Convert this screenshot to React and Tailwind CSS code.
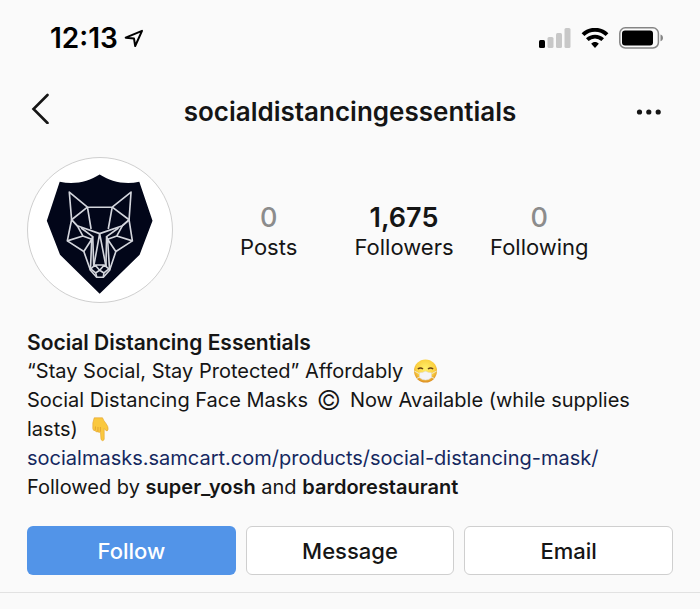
import React from "react";

const stats = [
  { label: "Posts", value: "0", muted: true },
  { label: "Followers", value: "1,675", muted: false },
  { label: "Following", value: "0", muted: true },
];

const StatusBar = () => {
  return (
    <div className="flex justify-between items-center h-7 pl-[50px] pr-9">
      <div className="flex items-center gap-[6px]">
        <span className="text-[28px] leading-7 font-semibold text-black">12:13</span>
        <svg width="20" height="19" viewBox="0 0 20 19" fill="none" aria-label="Location">
          <path
            d="M1.7 8.7 L18 1.8 L11.2 17 L10 9.6 Z"
            stroke="black"
            strokeWidth="2"
            strokeLinejoin="round"
          />
        </svg>
      </div>
      <div className="flex items-center gap-[10px]">
        <svg width="32" height="20" viewBox="0 0 32 20" aria-label="Signal">
          <rect x="0" y="12" width="6" height="8" rx="1.5" fill="black" />
          <rect x="8.5" y="9" width="6" height="11" rx="1.5" fill="#c8c8c8" />
          <rect x="17" y="5" width="6" height="15" rx="1.5" fill="#c8c8c8" />
          <rect x="25.5" y="0" width="6" height="20" rx="1.5" fill="#c8c8c8" />
        </svg>
        <svg width="28" height="20" viewBox="0 0 28 20" fill="none" aria-label="Wi-Fi">
          <path d="M2 6.6 C8.6 .2 19.4 .2 26 6.6" stroke="black" strokeWidth="4" />
          <path d="M6.3 11.7 C10.6 7.6 17.4 7.6 21.7 11.7" stroke="black" strokeWidth="3.8" />
          <path d="M10.2 15.8 C12.2 13.4 15.8 13.4 17.8 15.8 L14 20 Z" fill="black" />
        </svg>
        <svg width="45" height="22" viewBox="0 0 45 22" fill="none" aria-label="Battery">
          <rect x=".8" y=".8" width="38.6" height="20.2" rx="5.5" stroke="#858585" strokeWidth="1.5" />
          <rect x="3" y="3.4" width="31" height="15" rx="3" fill="black" />
          <path d="M41.5 7.5 C44.8 8.2 44.8 13.6 41.5 14.3 Z" fill="#858585" />
        </svg>
      </div>
    </div>
  );
};

const WolfLogo = () => {
  return (
    <svg viewBox="21 22 436 436" className="w-full h-full" aria-label="Social Distancing Essentials">
      <path
        d="M238 72 C205 93 163 104 117 94 L78 212 L118 315 L238 433 L359 315 L398 212 L358 94 C313 104 271 93 238 72 Z"
        fill="#020619"
      />
      <g fill="none" stroke="#d3d5dc" strokeWidth="5" strokeLinejoin="round">
        <path d="M146 125 L201 171 H276 L333 125 L327 209 L337 273 L287 305 L268 362 L249 383 H229 L210 362 L190 305 L140 273 L153 209 Z" />
        <path d="M201 171 L153 209 L170 227 M276 171 L327 209 L307 227" />
        <path d="M201 171 L212 237 M276 171 L264 237" />
        <path d="M153 209 L170 227 L238 251 L307 227 L327 209" />
        <path d="M170 227 L187 258 L140 273 M187 258 L214 268 L190 305 M182 234 L217 260 L214 268 L210 362" />
        <path d="M307 227 L290 258 L337 273 M290 258 L262 268 L287 305 M295 234 L259 260 L262 268 L268 362" />
        <path d="M238 251 L220 350 M238 251 L257 350" />
        <path d="M217 260 L220 350 M259 260 L257 350" />
        <path d="M224 346 H252 L266 358 L251 370 L238 362 L226 370 L211 358 Z M224 346 L238 362 L252 346 M226 370 L229 383 M251 370 L249 383" />
      </g>
    </svg>
  );
};

const MaskEmoji = () => {
  return (
    <svg width="25" height="24" viewBox="0 0 25 24" className="inline-block align-[-5px]" role="img" aria-label="Face with medical mask">
      <defs>
        <radialGradient id="face" cx="50%" cy="38%" r="62%">
          <stop offset="0" stopColor="#fff06a" />
          <stop offset=".65" stopColor="#fbd040" />
          <stop offset="1" stopColor="#dc8d22" />
        </radialGradient>
      </defs>
      <circle cx="12.5" cy="12" r="11.5" fill="url(#face)" />
      <path d="M4.8 10 Q7.5 8 10 10 M15 10 Q17.5 8 20.2 10" fill="none" stroke="#684014" strokeWidth="1.5" />
      <path d="M1.3 12 L6 14.5 M23.7 12 L19 14.5 M3.5 19.5 L7 18 M21.5 19.5 L18 18" stroke="#eee6cf" strokeWidth="1" />
      <path d="M6.5 13.8 Q9.5 13.8 12.5 12.2 Q15.5 13.8 18.5 13.8 V18.5 Q16 21 12.5 21 Q9 21 6.5 18.5 Z" fill="#f4f4f6" stroke="#dcd9d2" strokeWidth=".5" />
    </svg>
  );
};

const PointDownEmoji = () => {
  return (
    <svg width="18" height="25" viewBox="0 0 18 25" className="inline-block align-[-6px]" role="img" aria-label="Pointing down">
      <path
        d="M3.2 .8 H11.5 Q12.5 3.5 15 6.5 Q17.8 10 17 13 Q16.3 14.6 14.8 13.4 L13.2 11.5 V22.5 Q11.8 25 10 22.5 L9.4 14.6 Q8.4 16.2 6.9 14.8 Q5.1 15.5 4.2 13.7 Q1.9 13.9 1.8 11.6 Q1.2 5.5 3.2 .8 Z"
        fill="#fac83e"
        stroke="#e2a12d"
        strokeWidth=".6"
      />
      <path d="M4.2 13.3 L4.5 9.5 M6.9 14.5 L7 10 M9.4 14.5 V10" fill="none" stroke="#d9952a" strokeWidth=".7" />
    </svg>
  );
};

const App = () => {
  return (
    <div className="min-h-screen bg-[#fafafa] pt-6 font-['Inter',sans-serif] text-[#151515]">
      <StatusBar />

      <header className="flex justify-between items-center h-10 mt-10 px-7">
        <button aria-label="Back" className="w-9 pl-[3px] pb-2">
          <svg width="20" height="32" viewBox="0 0 20 32" fill="none">
            <path d="M16.5 3 L2.5 17 L16.5 31" stroke="#151515" strokeWidth="2.6" strokeLinecap="round" />
          </svg>
        </button>
        <h1 className="text-[26px] leading-8 font-semibold">socialdistancingessentials</h1>
        <button aria-label="More options" className="w-9 pr-[5px]">
          <svg width="26" height="6" viewBox="0 0 26 6" fill="#151515">
            <circle cx="3.5" cy="3" r="2.6" />
            <circle cx="12.8" cy="3" r="2.6" />
            <circle cx="22.2" cy="3" r="2.6" />
          </svg>
        </button>
      </header>

      <section className="flex items-center mt-[25px] px-[27px]">
        <div className="size-[146px] shrink-0 rounded-full border border-[#cfcfcf] bg-white overflow-hidden">
          <WolfLogo />
        </div>
        <dl className="flex-1 grid grid-cols-3 ml-7 mr-[66px] pt-1 text-center">
          {stats.map((stat) => (
            <div key={stat.label} className="flex flex-col-reverse">
              <dt className="text-[22px] leading-7">{stat.label}</dt>
              <dd
                className={
                  stat.muted
                    ? "text-[27px] leading-[30px] font-medium text-[#8c8c8c]"
                    : "text-[27px] leading-[30px] font-semibold"
                }
              >
                {stat.value}
              </dd>
            </div>
          ))}
        </dl>
      </section>

      <section className="mt-[25px] px-[27px] text-[20px] leading-[29px]">
        <h2 className="text-[21px] leading-[29px] font-semibold">Social Distancing Essentials</h2>
        <p>
          “Stay Social, Stay Protected” Affordably <span className="ml-1"><MaskEmoji /></span>
        </p>
        <p>
          Social Distancing Face Masks{" "}
          <span className="inline-block mx-[3px] text-[27px] leading-5 font-light align-[-3px]">©</span> Now
          Available (while supplies lasts) <span className="ml-2"><PointDownEmoji /></span>
        </p>
        <a href="#" className="block text-[#15285f]">
          socialmasks.samcart.com/products/social-distancing-mask/
        </a>
        <p>
          Followed by <b className="font-semibold">super_yosh</b> and{" "}
          <b className="font-semibold">bardorestaurant</b>
        </p>
      </section>

      <div className="grid grid-cols-3 gap-[10px] mt-6 px-[27px] pb-[17px] border-b border-[#e2e2e2] text-[22px] leading-7 font-medium">
        <button className="h-[49px] rounded-md bg-[#5294e8] text-white">Follow</button>
        <button className="h-[49px] rounded-md border border-[#cfcfcf] bg-white">Message</button>
        <button className="h-[49px] rounded-md border border-[#cfcfcf] bg-white">Email</button>
      </div>
    </div>
  );
};

export default App;
